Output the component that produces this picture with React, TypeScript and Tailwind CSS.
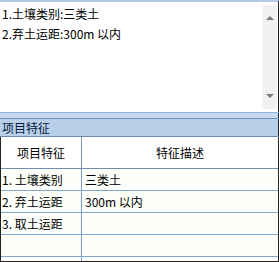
const font = { fontFamily: '"Noto Sans CJK SC", "Liberation Sans", sans-serif' };

const rows = [
  { name: "1. 土壤类别", desc: "三类土" },
  { name: "2. 弃土运距", desc: "300m 以内" },
  { name: "3. 取土运距", desc: "" },
  { name: "", desc: "" },
];

function ScrollBar() {
  return (
    <div className="w-[15px] my-[3px] mr-[1px] bg-[#f1f1f1] border-l border-[#fafafa] flex flex-col justify-between items-center py-[10px]">
      <svg width="8" height="5" viewBox="0 0 8 5">
        <path d="M0 5 L4 1 L8 5 Z" fill="#7a7a7a" />
      </svg>
      <svg width="8" height="5" viewBox="0 0 8 5">
        <path d="M0 0 L4 4 L8 0 Z" fill="#7a7a7a" />
      </svg>
    </div>
  );
}

export default function App() {
  return (
    <div
      className="w-[279px] h-[262px] bg-white overflow-hidden flex flex-col text-black text-[12px] leading-none"
      style={font}
    >
      <div className="h-[112px] flex border-t-2 border-[#b4cbe8] border-r border-r-[#222]">
        <div className="flex-1 pl-[2px] pt-[6px] flex flex-col gap-[8px] text-[12px]">
          <div>1.土壤类别:三类土</div>
          <div>2.弃土运距:300m 以内</div>
        </div>
        <ScrollBar />
      </div>

      <div className="h-[1px] bg-[#8fb0d8]" />
      <div className="h-[5px] bg-[#c6dbf3] border-r border-[#222]" />
      <div className="h-[1px] bg-[#6f8fb8]" />
      <div className="h-[17px] bg-[#b9d0ea] border-r border-[#222] flex items-center pl-[2px] text-[#0a1a3a]">
        项目特征
      </div>
      <div className="h-[1px] bg-[#6b89b0]" />

      <div className="flex-1 flex flex-col border-l border-r border-b border-[#222]">
        <div className="h-[32px] flex border-b border-[#6f8fb0]">
          <div className="w-[81px] border-r border-[#7d93c8] flex items-center justify-center">
            项目特征
          </div>
          <div className="flex-1 flex items-center justify-center">特征描述</div>
        </div>
        {rows.map((r, i) => (
          <div
            key={i}
            className="h-[22px] shrink-0 flex border-b border-[#80a8cc] bg-[#fdfffa]"
          >
            <div className="w-[81px] border-r border-[#7d9bd0] flex items-center pl-[1px]">
              {r.name}
            </div>
            <div className="flex-1 flex items-center pl-[3px]">{r.desc}</div>
          </div>
        ))}
        <div className="flex-1 flex">
          <div className="w-[81px] border-r border-[#7d9bd0]" />
        </div>
      </div>
    </div>
  );
}
